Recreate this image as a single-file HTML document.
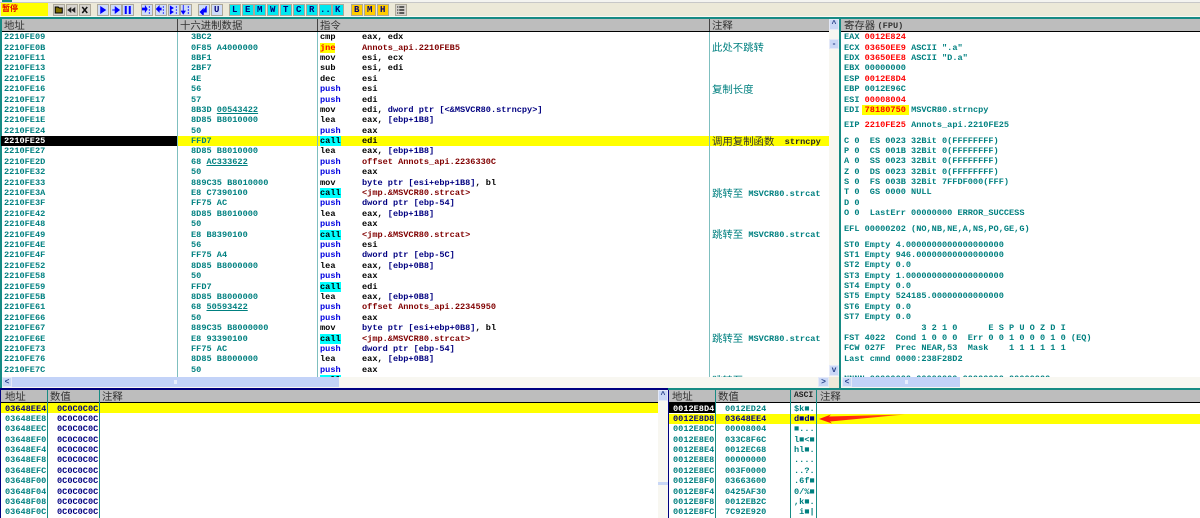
<!DOCTYPE html>
<html><head><meta charset="utf-8"><style>
html,body{margin:0;padding:0;width:1200px;height:518px;overflow:hidden;background:#fff}
div,pre,span.a{position:absolute}
pre{margin:0;white-space:pre;font:bold 8.6px/10.39px "Liberation Mono",monospace;color:#008080}
.p{overflow:hidden}
.h{background:#bdbdbd;height:12px;top:19px}
.t{position:absolute;white-space:pre;font:10.4px/12px "Noto Sans CJK SC","WenQuanYi Zen Hei",sans-serif;color:#333}
.cm{position:absolute;left:712px;white-space:pre;font:bold 8.6px/11px "Liberation Mono","Noto Sans CJK SC",monospace;color:#008080}
.cj{font:10.4px/11px "Noto Sans CJK SC",sans-serif}
.la{position:relative;top:-1px}
.b{position:absolute;top:4px;height:12px;width:11.5px;box-sizing:border-box;border:1px solid #aca899;font:bold 9px/10px "Liberation Mono",monospace;color:#00007b;text-align:center}
.g{background:#d6d3ce}.u{background:#cfdcf8}.c{background:#00e8f0}.y{background:#ffcc00}
.b svg{position:absolute;left:0;top:0;width:9.5px;height:10px}
.n{color:#000080}.r{color:#800000}.k{color:#000}.bl{color:#0000e0}
.cy{background:#00ffff;color:#000}
.ye{background:#ffff00;color:#ff0000}
.rd{color:#ff0000}
.ul{text-decoration:underline}
.sb{background:#c3d3f8}
.btn{position:absolute;background:#c9d7f6;border:1px solid #e4e9f8;box-sizing:border-box;color:#26408a;font:bold 8px/9px "Liberation Mono",monospace;text-align:center}
</style></head><body>

<div style="left:0;top:0;width:1200px;height:3px;background:#f4f4f0"></div>
<div style="left:0;top:2px;width:1200px;height:1px;background:#c8c8c8"></div>
<div style="left:0;top:3px;width:1200px;height:13px;background:#ece9d8"></div>
<div style="left:0;top:16px;width:1200px;height:1px;background:#f8f8f4"></div>
<div style="left:0;top:17px;width:1200px;height:2px;background:#178b84"></div>
<div style="left:2px;top:0;width:10px;height:2px;background:#178b84"></div>

<div style="left:1px;top:3px;width:47px;height:13px;background:#ffff00"></div>
<div class="t" style="left:2px;top:3px;font-size:8px;color:#e00000;font-weight:bold">暂停</div>

<span class="b g" style="left:53px"><svg viewBox="0 0 9 10"><path d="M1 2h3l1 1h3v5H1z" fill="#807000" stroke="#000"/></svg></span>
<span class="b g" style="left:66px"><svg viewBox="0 0 9 10"><path d="M4 2v6L0 5zM8 2v6L4 5z" fill="#222"/></svg></span>
<span class="b g" style="left:79px"><svg viewBox="0 0 9 10"><path d="M2 2l5 6M7 2l-5 6" stroke="#111" stroke-width="1.5"/></svg></span>
<span class="b u" style="left:97px"><svg viewBox="0 0 9 10"><path d="M2 1v8l6-4z" fill="#0000ff"/></svg></span>
<span class="b u" style="left:110px"><svg viewBox="0 0 9 10"><path d="M1 5h3M4 2v6l4-3z" fill="#0000ff" stroke="#0000ff"/></svg></span>
<span class="b u" style="left:122px"><svg viewBox="0 0 9 10"><path d="M1.5 1h2v8h-2zM5.5 1h2v8h-2z" fill="#0000ff"/></svg></span>
<span class="b u" style="left:141px"><svg viewBox="0 0 9 10"><path d="M0 3h3v-2l2 3-2 3V5H0zM7 1v2M7 4v2M7 7v2" fill="#0000ff" stroke="#0000ff" stroke-width=".7"/></svg></span>
<span class="b u" style="left:155px"><svg viewBox="0 0 9 10"><path d="M5 3H3V1L0 4l3 3V5h2zM7 1v2M7 4v2M7 7v2" fill="#0000ff" stroke="#0000ff" stroke-width=".7"/></svg></span>
<span class="b u" style="left:168px"><svg viewBox="0 0 9 10"><path d="M1 1l3 2-3 2zM1 5l3 2-3 2zM7 1v2M7 4v2M7 7v2" fill="#0000ff" stroke="#0000ff" stroke-width=".7"/></svg></span>
<span class="b u" style="left:180px"><svg viewBox="0 0 9 10"><path d="M2 0v7M0 6l2 3 2-3zM7 1v2M7 4v2M7 7v2" fill="#0000ff" stroke="#0000ff" stroke-width=".8"/></svg></span>
<span class="b u" style="left:198px"><svg viewBox="0 0 9 10"><path d="M7 1v6H3M4 4L1 7l3 3z" fill="#0000ff" stroke="#0000ff"/></svg></span>
<span class="b u" style="left:211px">U</span>
<span class="b c" style="left:229px">L</span>
<span class="b c" style="left:242px">E</span>
<span class="b c" style="left:254px">M</span>
<span class="b c" style="left:267px">W</span>
<span class="b c" style="left:280px">T</span>
<span class="b c" style="left:293px">C</span>
<span class="b c" style="left:306px">R</span>
<span class="b c" style="left:319px;width:13px">...</span>
<span class="b c" style="left:332px">K</span>
<span class="b y" style="left:351px">B</span>
<span class="b y" style="left:364px">M</span>
<span class="b y" style="left:377px">H</span>
<span class="b g" style="left:395px"><svg viewBox="0 0 9 10"><path d="M1 2h1M3 2h5M1 5h1M3 5h5M1 8h1M3 8h5" stroke="#111" stroke-width="1.3"/></svg></span>

<!-- Disassembly pane -->
<div style="left:0;top:19px;width:2px;height:369px;background:#178b84"></div>
<div class="h" style="left:2px;width:827px"></div>
<div style="left:2px;top:31px;width:827px;height:1px;background:#000"></div>
<div class="t" style="left:4px;top:19px">地址</div>
<div class="t" style="left:180px;top:19px">十六进制数据</div>
<div class="t" style="left:320px;top:19px">指令</div>
<div class="t" style="left:712px;top:19px">注释</div>
<div style="left:177px;top:19px;width:1px;height:12px;background:#444"></div>
<div style="left:317px;top:19px;width:1px;height:12px;background:#444"></div>
<div style="left:709px;top:19px;width:1px;height:12px;background:#444"></div>

<div style="left:178px;top:136px;width:651px;height:10px;background:#ffff00"></div>
<div style="left:1px;top:136px;width:176px;height:10px;background:#000"></div>

<div style="left:177px;top:32px;width:1px;height:345px;background:#7fbfbf"></div>
<div style="left:317px;top:32px;width:1px;height:345px;background:#7fbfbf"></div>
<div style="left:709px;top:32px;width:1px;height:345px;background:#7fbfbf"></div>

<div class="p" style="left:0;top:32px;width:829px;height:345px">
<pre style="left:4px;top:.2px">2210FE09
2210FE0B
2210FE11
2210FE13
2210FE15
2210FE16
2210FE17
2210FE18
2210FE1E
2210FE24
<span style="color:#fff">2210FE25</span>
2210FE27
2210FE2D
2210FE32
2210FE33
2210FE3A
2210FE3F
2210FE42
2210FE48
2210FE49
2210FE4E
2210FE4F
2210FE52
2210FE58
2210FE59
2210FE5B
2210FE61
2210FE66
2210FE67
2210FE6E
2210FE73
2210FE76
2210FE7C</pre>
<pre style="left:191px;top:.2px">3BC2
0F85 A4000000
8BF1
2BF7
4E
56
57
8B3D <span class="ul">00543422</span>
8D85 B8010000
50
FFD7
8D85 B8010000
68 <span class="ul">AC333622</span>
50
889C35 B8010000
E8 C7390100
FF75 AC
8D85 B8010000
50
E8 B8390100
56
FF75 A4
8D85 B8000000
50
FFD7
8D85 B8000000
68 <span class="ul">50593422</span>
50
889C35 B8000000
E8 93390100
FF75 AC
8D85 B8000000
50</pre>
<pre style="left:320px;top:.2px;color:#000">cmp
<span class="ye">jne</span>
mov
sub
dec
<span class="bl">push</span>
<span class="bl">push</span>
mov
lea
<span class="bl">push</span>
<span class="cy">call</span>
lea
<span class="bl">push</span>
<span class="bl">push</span>
mov
<span class="cy">call</span>
<span class="bl">push</span>
lea
<span class="bl">push</span>
<span class="cy">call</span>
<span class="bl">push</span>
<span class="bl">push</span>
lea
<span class="bl">push</span>
<span class="cy">call</span>
lea
<span class="bl">push</span>
<span class="bl">push</span>
mov
<span class="cy">call</span>
<span class="bl">push</span>
lea
<span class="bl">push</span>
<span class="cy">call</span></pre>
<pre style="left:362px;top:.2px;color:#000">eax, edx
<span class="r">Annots_api.2210FEB5</span>
esi, ecx
esi, edi
esi
esi
edi
edi, <span class="n">dword ptr [&lt;&amp;MSVCR80.strncpy&gt;]</span>
eax, <span class="n">[ebp+1B8]</span>
eax
edi
eax, <span class="n">[ebp+1B8]</span>
<span class="r">offset Annots_api.2236330C</span>
eax
<span class="n">byte ptr [esi+ebp+1B8]</span>, bl
<span class="r">&lt;jmp.&amp;MSVCR80.strcat&gt;</span>
<span class="n">dword ptr [ebp-54]</span>
eax, <span class="n">[ebp+1B8]</span>
eax
<span class="r">&lt;jmp.&amp;MSVCR80.strcat&gt;</span>
esi
<span class="n">dword ptr [ebp-5C]</span>
eax, <span class="n">[ebp+0B8]</span>
eax
edi
eax, <span class="n">[ebp+0B8]</span>
<span class="r">offset Annots_api.22345950</span>
eax
<span class="n">byte ptr [esi+ebp+0B8]</span>, bl
<span class="r">&lt;jmp.&amp;MSVCR80.strcat&gt;</span>
<span class="n">dword ptr [ebp-54]</span>
eax, <span class="n">[ebp+0B8]</span>
eax</pre>
<div class="cm" style="top:8.5px"><span class="cj">此处不跳转</span></div>
<div class="cm" style="top:50.5px"><span class="cj">复制长度</span></div>
<div class="cm" style="top:102.5px;color:#333"><span class="cj">调用复制函数</span>  <span class="la" style="color:#222">strncpy</span></div>
<div class="cm" style="top:154.5px"><span class="cj">跳转至</span> <span class="la">MSVCR80.strcat</span></div>
<div class="cm" style="top:196px"><span class="cj">跳转至</span> <span class="la">MSVCR80.strcat</span></div>
<div class="cm" style="top:300px"><span class="cj">跳转至</span> <span class="la">MSVCR80.strcat</span></div>
<div class="cm" style="top:342px"><span class="cj">跳转至</span></div>
</div>

<!-- Disassembly vertical scrollbar -->
<div style="left:829px;top:19px;width:10px;height:369px;background:#f8f7f1"></div>
<div class="btn" style="left:829px;top:19px;width:10px;height:11px">^</div>
<div class="btn" style="left:829px;top:39px;width:10px;height:10px">-</div>
<div class="btn" style="left:829px;top:365px;width:10px;height:11px">v</div>
<!-- Disassembly horizontal scrollbar -->
<div style="left:0;top:377px;width:839px;height:11px;background:#f8f7f1"></div>
<div style="left:0;top:377px;width:2px;height:11px;background:#178b84"></div>
<div class="btn" style="left:2px;top:377px;width:10px;height:10px">&lt;</div>
<div class="sb" style="left:12px;top:377px;width:327px;height:10px"></div>
<div style="left:174px;top:380px;width:3px;height:4px;background:#e8eefc"></div>
<div class="btn" style="left:818px;top:377px;width:11px;height:10px">&gt;</div>
<div style="left:829px;top:377px;width:10px;height:11px;background:#ece9d8"></div>
<div style="left:839px;top:19px;width:2px;height:369px;background:#178b84"></div>

<!-- Registers pane -->
<div class="h" style="left:841px;width:359px"></div>
<div style="left:841px;top:31px;width:359px;height:1px;background:#000"></div>
<div class="t" style="left:844px;top:19px">寄存器 <span class="la" style="font:bold 8.6px/12px 'Liberation Mono',monospace">(FPU)</span></div>
<div style="left:862px;top:104.5px;width:47px;height:10px;background:#ffff00"></div>
<div class="p" style="left:841px;top:32px;width:359px;height:345px">
<pre style="left:3px;top:.2px">EAX <span class="rd">0012E824</span>
ECX <span class="rd">03650EE9</span> ASCII ".a"
EDX <span class="rd">03650EE8</span> ASCII "D.a"
EBX 00000000
ESP <span class="rd">0012E8D4</span>
EBP 0012E96C
ESI <span class="rd">00008004</span>
EDI <span class="rd">78180750</span> MSVCR80.strncpy</pre>
<pre style="left:3px;top:87.8px">EIP <span class="rd">2210FE25</span> Annots_api.2210FE25</pre>
<pre style="left:3px;top:103.5px">C 0  ES 0023 32Bit 0(FFFFFFFF)
P 0  CS 001B 32Bit 0(FFFFFFFF)
A 0  SS 0023 32Bit 0(FFFFFFFF)
Z 0  DS 0023 32Bit 0(FFFFFFFF)
S 0  FS 003B 32Bit 7FFDF000(FFF)
T 0  GS 0000 NULL
D 0
O 0  LastErr 00000000 ERROR_SUCCESS</pre>
<pre style="left:3px;top:191.8px">EFL 00000202 (NO,NB,NE,A,NS,PO,GE,G)</pre>
<pre style="left:3px;top:207.5px">ST0 Empty 4.0000000000000000000
ST1 Empty 946.00000000000000000
ST2 Empty 0.0
ST3 Empty 1.0000000000000000000
ST4 Empty 0.0
ST5 Empty 524185.00000000000000
ST6 Empty 0.0
ST7 Empty 0.0
               3 2 1 0      E S P U O Z D I
FST 4022  Cond 1 0 0 0  Err 0 0 1 0 0 0 1 0 (EQ)
FCW 027F  Prec NEAR,53  Mask    1 1 1 1 1 1
Last cmnd 0000:238F28D2</pre>
<pre style="left:3px;top:341.5px">NNNN 00000000 00000000 00000000 00000000</pre>
</div>
<div style="left:841px;top:377px;width:359px;height:11px;background:#f8f7f1"></div>
<div class="btn" style="left:842px;top:377px;width:10px;height:10px">&lt;</div>
<div class="sb" style="left:852px;top:377px;width:108px;height:10px"></div>
<div style="left:905px;top:380px;width:3px;height:4px;background:#e8eefc"></div>

<!-- Separator -->
<div style="left:0;top:388px;width:668px;height:2px;background:#000080"></div>
<div style="left:668px;top:388px;width:532px;height:2px;background:#178b84"></div>

<!-- Dump pane -->
<div style="left:0;top:390px;width:1px;height:128px;background:#000080"></div>
<div class="h" style="left:1px;top:390px;width:657px"></div>
<div style="left:1px;top:402px;width:657px;height:1px;background:#000"></div>
<div class="t" style="left:5px;top:390px">地址</div>
<div class="t" style="left:50px;top:390px">数值</div>
<div class="t" style="left:102px;top:390px">注释</div>
<div style="left:1px;top:403px;width:657px;height:10px;background:#ffff00"></div>
<div style="left:47px;top:390px;width:1px;height:128px;background:#178b84"></div>
<div style="left:99px;top:390px;width:1px;height:128px;background:#178b84"></div>
<pre style="left:5px;top:403.5px;height:114.5px;overflow:hidden"><span class="n">03648EE4</span>
03648EE8
03648EEC
03648EF0
03648EF4
03648EF8
03648EFC
03648F00
03648F04
03648F08
03648F0C</pre>
<pre style="left:57px;top:403.5px;height:114.5px;overflow:hidden;color:#000080">0C0C0C0C
0C0C0C0C
0C0C0C0C
0C0C0C0C
0C0C0C0C
0C0C0C0C
0C0C0C0C
0C0C0C0C
0C0C0C0C
0C0C0C0C
0C0C0C0C</pre>
<div style="left:658px;top:390px;width:10px;height:128px;background:#f8f7f1"></div>
<div class="btn" style="left:658px;top:390px;width:10px;height:11px">^</div>
<div style="left:658px;top:482px;width:10px;height:3px;background:#c9d7f6"></div>
<div style="left:668px;top:390px;width:1px;height:128px;background:#000080"></div>

<!-- Stack pane -->
<div class="h" style="left:669px;top:390px;width:531px"></div>
<div style="left:669px;top:402px;width:531px;height:1px;background:#000"></div>
<div class="t" style="left:672px;top:390px">地址</div>
<div class="t" style="left:718px;top:390px">数值</div>
<div style="left:794px;top:390px;white-space:pre;font:bold 8px/12px 'Liberation Mono',monospace;color:#222">ASCI</div>
<div class="t" style="left:820px;top:390px">注释</div>
<div style="left:669px;top:413.5px;width:531px;height:10.5px;background:#ffff00"></div>
<div style="left:669px;top:403px;width:46px;height:10px;background:#000"></div>
<div style="left:715px;top:390px;width:1px;height:128px;background:#178b84"></div>
<div style="left:790px;top:390px;width:1px;height:128px;background:#178b84"></div>
<div style="left:816px;top:390px;width:1px;height:128px;background:#178b84"></div>
<pre style="left:673px;top:403.5px;height:114.5px;overflow:hidden"><span style="color:#fff">0012E8D4</span>
<span class="n">0012E8D8</span>
0012E8DC
0012E8E0
0012E8E4
0012E8E8
0012E8EC
0012E8F0
0012E8F4
0012E8F8
0012E8FC</pre>
<pre style="left:725px;top:403.5px;height:114.5px;overflow:hidden">0012ED24
<span class="n">03648EE4</span>
00008004
033C8F6C
0012EC68
00000000
003F0000
03663600
0425AF30
0012EB2C
7C92E920</pre>
<pre style="left:794px;top:403.5px;height:114.5px;overflow:hidden">$k■.
<span class="n">d■d■</span>
■...
l■&lt;■
hl■.
....
..?.
.6f■
0/%■
,k■.
 i■|</pre>
<svg style="position:absolute;left:815px;top:410px" width="95" height="18" viewBox="815 410 95 18">
<defs><linearGradient id="ar" x1="0" x2="1"><stop offset="0" stop-color="#ff1a0a"/><stop offset=".7" stop-color="#ff3a10"/><stop offset="1" stop-color="#ff9a10"/></linearGradient></defs>
<path d="M819 419L831 414.5L829 416.5L905 414.5L830 421.5L832 423.5z" fill="url(#ar)"/>
</svg>
</body></html>
